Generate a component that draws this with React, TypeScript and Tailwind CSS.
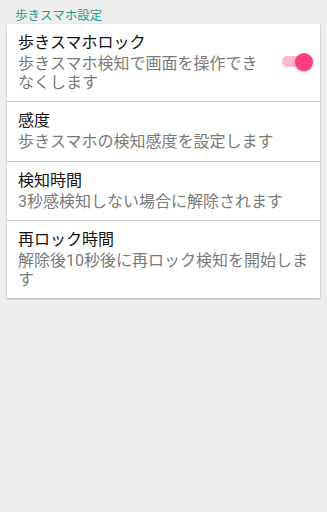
import React from "react";

const font = { fontFamily: 'Roboto, "Noto Sans CJK JP", sans-serif' };

function Row({
  title,
  sub,
  last,
  children,
  pr = "pr-[4px]",
}: {
  title: string;
  sub: string;
  last?: boolean;
  children?: React.ReactNode;
  pr?: string;
}) {
  return (
    <div className={`flex items-center pl-[11px] ${pr} pt-[7px] pb-[9px] ${last ? "" : "border-b border-[#c8c8c8]"}`}>
      <div className="flex-1 min-w-0">
        <div className="text-[16px] leading-[24px] text-[#111111]">{title}</div>
        <div className="text-[16px] leading-[18.5px] text-[#7a7a7a]">{sub}</div>
      </div>
      {children}
    </div>
  );
}

export default function App() {
  return (
    <div className="min-h-screen w-full bg-[#eeeeee]" style={font}>
      <div className="pl-[15px] pt-[8px] text-[12.5px] leading-[16px] text-[#1f9e8e]">歩きスマホ設定</div>
      <div className="mx-[7px] bg-white shadow-[0_1px_2px_rgba(0,0,0,0.28)]">
        <Row title="歩きスマホロック" sub="歩きスマホ検知で画面を操作できなくします" pr="pr-[7px]">
          <div className="w-[52px] flex justify-end items-center">
            <div className="relative w-[31px] h-[20px] flex items-center">
              <div className="w-[30px] h-[11px] rounded-full bg-[#ffb7cf]" />
              <div className="absolute right-0 top-[1px] w-[18px] h-[18px] rounded-full bg-[#ff3d7f] shadow-[0_1px_2px_rgba(0,0,0,0.35)]" />
            </div>
          </div>
        </Row>
        <Row title="感度" sub="歩きスマホの検知感度を設定します" />
        <Row title="検知時間" sub="3秒感検知しない場合に解除されます" />
        <Row title="再ロック時間" sub="解除後10秒後に再ロック検知を開始します" last />
      </div>
    </div>
  );
}
